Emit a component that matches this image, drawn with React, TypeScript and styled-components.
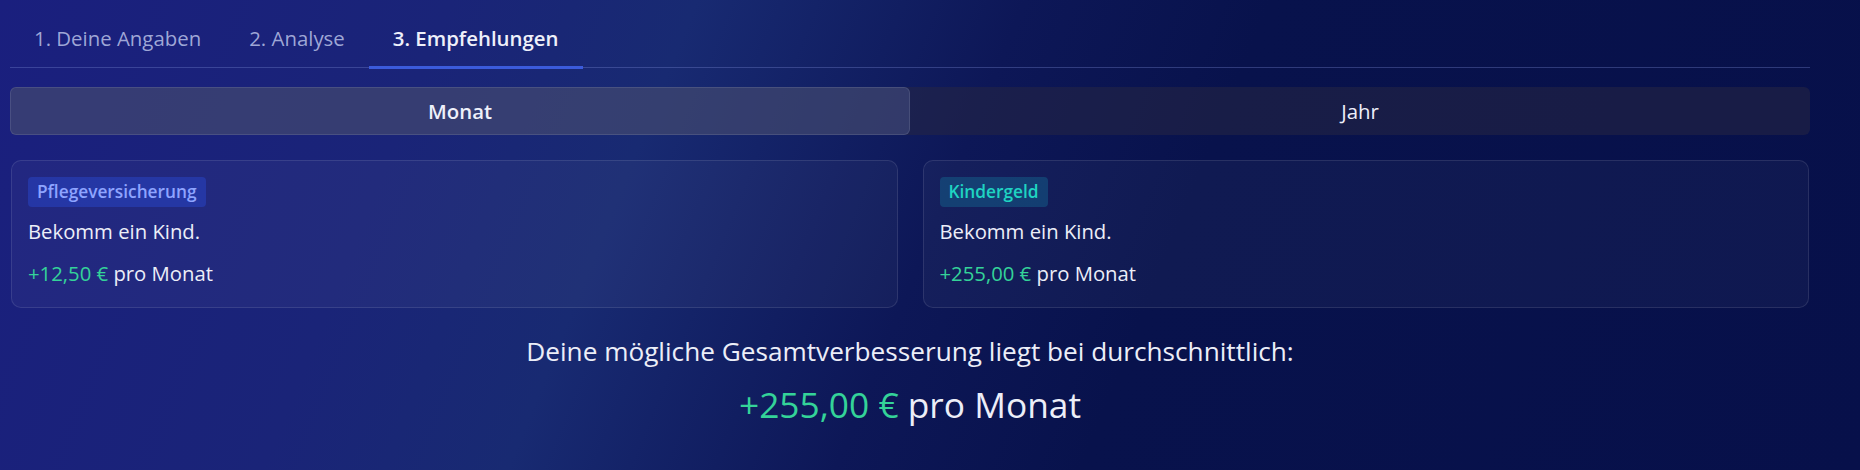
import React, { useState } from "react";
import styled, { createGlobalStyle } from "styled-components";

const GlobalStyle = createGlobalStyle`
  html, body {
    margin: 0;
    padding: 0;
  }
  body {
    width: 1860px;
    height: 470px;
    overflow: hidden;
    font-family: "Open Sans", "Noto Sans", "Lato", sans-serif;
    color: #eceef8;
    background: linear-gradient(112deg, #1a1f7e 0%, #1a2478 22%, #182a72 34%, #0d1757 50%, #08124c 62%, #07104a 100%);
  }
`;

const Page = styled.div`
  width: 1800px;
  padding: 10px 0 0 10px;
  display: flex;
  flex-direction: column;
`;

const TabList = styled.div`
  display: flex;
  border-bottom: 1px solid rgba(120, 135, 210, 0.35);
  height: 57px;
`;

const Tab = styled.button<{ $active?: boolean }>`
  font-family: inherit;
  font-size: 20.4px;
  font-weight: ${(p) => (p.$active ? 600 : 400)};
  color: ${(p) => (p.$active ? "#eef0fa" : "rgba(190, 198, 235, 0.82)")};
  background: transparent;
  border: none;
  border-bottom: 3px solid ${(p) => (p.$active ? "#3b5bdb" : "transparent")};
  margin-bottom: -2px;
  padding: 0 24px;
  height: 59px;
  line-height: 56px;
  cursor: pointer;
`;

const Toggle = styled.div`
  margin-top: 19px;
  height: 48px;
  display: grid;
  grid-template-columns: 1fr 1fr;
  background: rgba(38, 38, 68, 0.55);
  border-radius: 6px;
`;

const Segment = styled.button<{ $active?: boolean }>`
  font-family: inherit;
  font-size: 20.4px;
  font-weight: ${(p) => (p.$active ? 600 : 400)};
  color: #eef0fa;
  border-radius: 6px;
  border: 1px solid ${(p) => (p.$active ? "rgba(255, 255, 255, 0.1)" : "transparent")};
  background: ${(p) => (p.$active ? "rgba(110, 125, 175, 0.28)" : "transparent")};
  cursor: pointer;
`;

const Cards = styled.div`
  margin-top: 25px;
  padding: 0 1px;
  display: grid;
  grid-template-columns: 1fr 1fr;
  gap: 25px;
`;

const Card = styled.div`
  border: 1px solid rgba(255, 255, 255, 0.1);
  border-radius: 10px;
  background: rgba(255, 255, 255, 0.035);
  padding: 16px 16px 14px;
  display: flex;
  flex-direction: column;
  align-items: flex-start;
  height: 148px;
  box-sizing: border-box;
`;

const Badge = styled.span<{ $tone: "blue" | "teal" }>`
  font-size: 17.3px;
  font-weight: 600;
  line-height: 30px;
  height: 30px;
  padding: 0 9px;
  border-radius: 4px;
  color: ${(p) => (p.$tone === "blue" ? "#8ea4ff" : "#1fd4c2")};
  background: ${(p) =>
    p.$tone === "blue" ? "rgba(40, 68, 195, 0.55)" : "rgba(20, 105, 145, 0.45)"};
`;

const CardText = styled.div`
  font-size: 20.3px;
  line-height: 28px;
  margin-top: 10px;
`;

const Amount = styled.div`
  font-size: 20.3px;
  line-height: 28px;
  margin-top: 14px;
`;

const Green = styled.span`
  color: #34d399;
`;

const Summary = styled.div`
  margin-top: 24px;
  text-align: center;
`;

const SummaryText = styled.div`
  font-size: 26.2px;
  line-height: 39px;
`;

const Total = styled.div`
  font-size: 35.3px;
  line-height: 54px;
  margin-top: 6px;
`;

const recs = [
  { tag: "Pflegeversicherung", tone: "blue" as const, text: "Bekomm ein Kind.", amount: "+12,50 €" },
  { tag: "Kindergeld", tone: "teal" as const, text: "Bekomm ein Kind.", amount: "+255,00 €" },
];

export default function App() {
  const [period, setPeriod] = useState<"Monat" | "Jahr">("Monat");
  return (
    <>
      <GlobalStyle />
      <Page>
        <TabList>
          <Tab>1. Deine Angaben</Tab>
          <Tab>2. Analyse</Tab>
          <Tab $active>3. Empfehlungen</Tab>
        </TabList>
        <Toggle>
          <Segment $active={period === "Monat"} onClick={() => setPeriod("Monat")}>
            Monat
          </Segment>
          <Segment $active={period === "Jahr"} onClick={() => setPeriod("Jahr")}>
            Jahr
          </Segment>
        </Toggle>
        <Cards>
          {recs.map((r) => (
            <Card key={r.tag}>
              <Badge $tone={r.tone}>{r.tag}</Badge>
              <CardText>{r.text}</CardText>
              <Amount>
                <Green>{r.amount}</Green> pro {period}
              </Amount>
            </Card>
          ))}
        </Cards>
        <Summary>
          <SummaryText>Deine mögliche Gesamtverbesserung liegt bei durchschnittlich:</SummaryText>
          <Total>
            <Green>+255,00 €</Green> pro {period}
          </Total>
        </Summary>
      </Page>
    </>
  );
}
